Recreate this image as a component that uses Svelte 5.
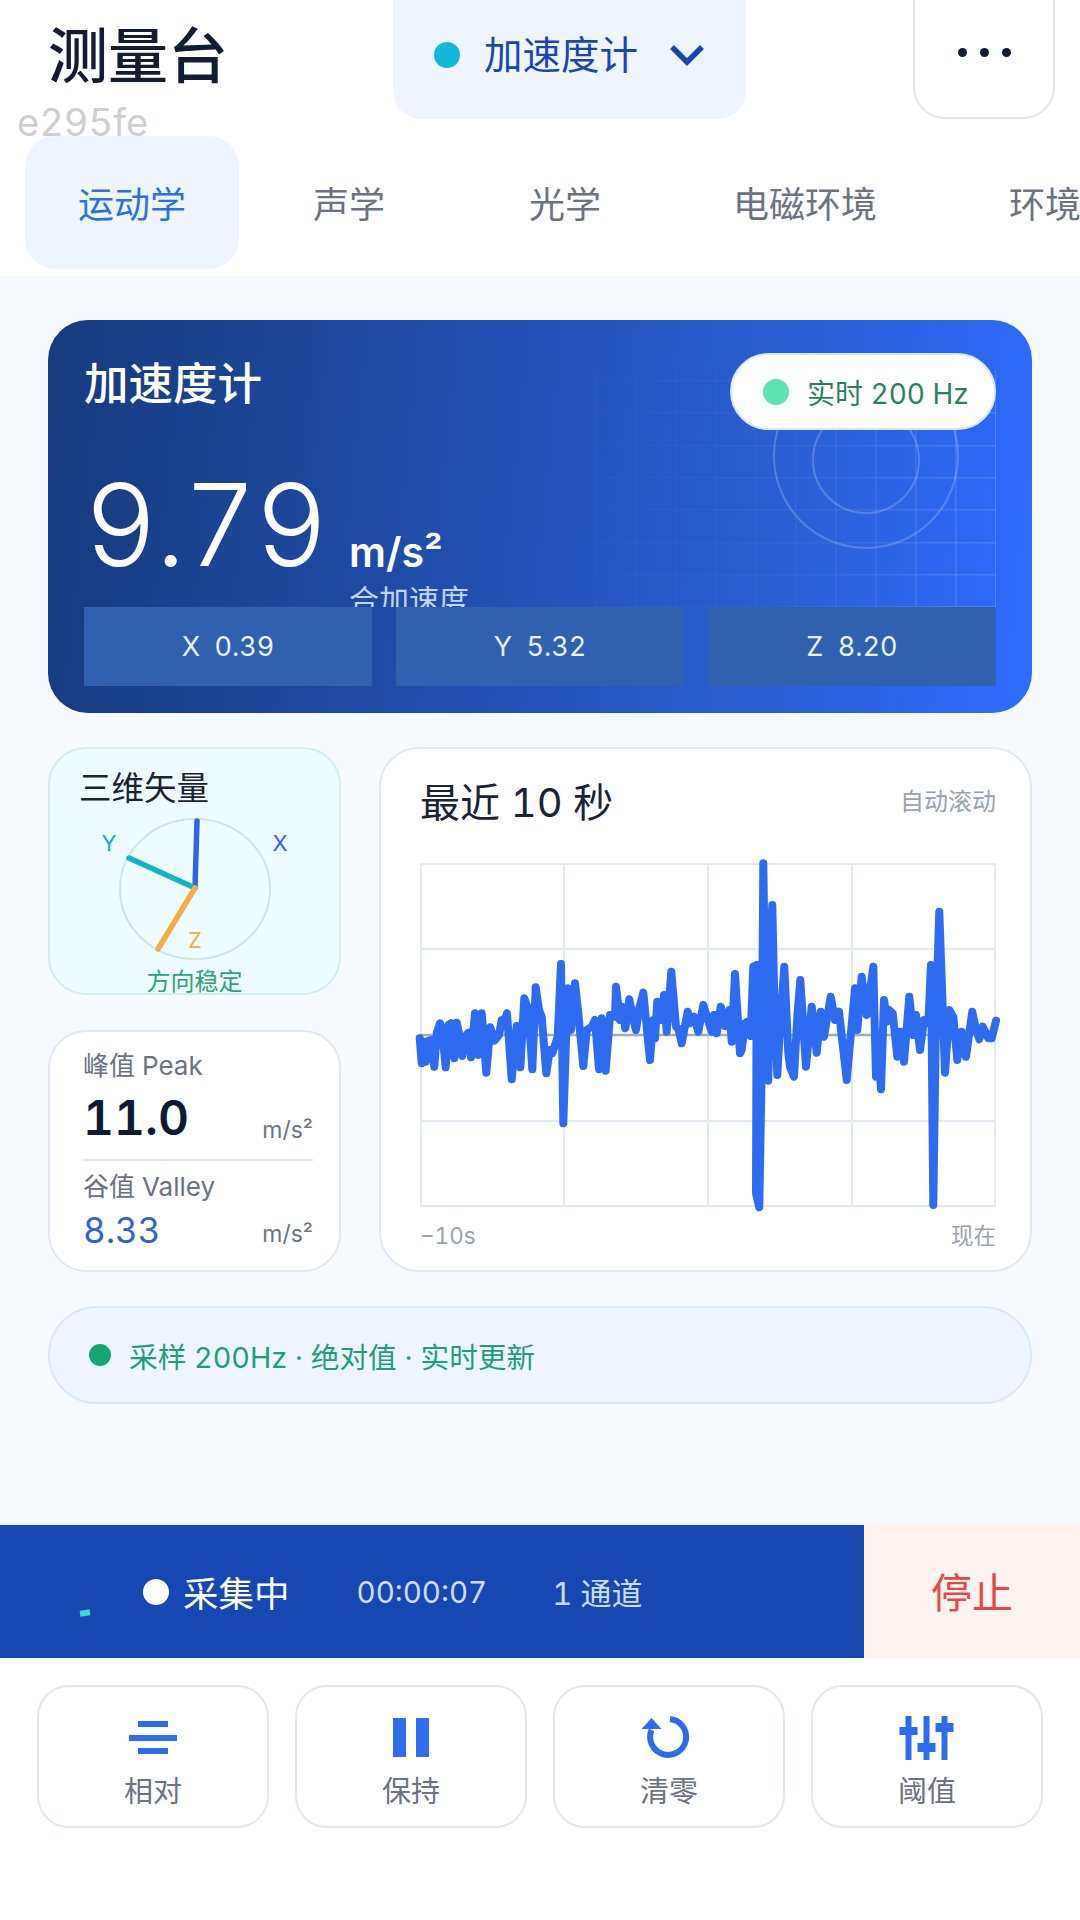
<script>
  const tabs = [
    { label: '运动学', active: true },
    { label: '声学' },
    { label: '光学' },
    { label: '电磁环境' },
    { label: '环境' }
  ];
  const axes = ['X  0.39', 'Y  5.32', 'Z  8.20'];
  const vLines = [0, 40, 80, 120, 160, 200, 240, 280, 320, 360, 400];
  const hLines = [10, 42, 75, 107, 139, 172, 204, 236];

  // Trace of the waveform, as [x, y] read from three crops of the chart.
  const a = [[14,265],[20,340],[28,275],[32,335],[40,272],[48,270],[58,350],[65,250],[75,220],[82,250],[92,352],[100,225],[108,220],[118,325],[125,218],[132,250],[142,318],[150,260],[160,248],[168,322],[180,190],[190,315],[200,190],[214,368],[226,232],[238,272],[252,255],[260,210],[270,210],[276,190],[290,388],[305,228],[316,352],[328,145],[340,180],[352,358],[362,112],[372,180],[380,200],[394,370],[404,300],[412,310],[428,260],[438,42],[445,520],[458,115],[468,240],[480,100],[490,190],[505,348],[515,240],[530,230],[540,210],[552,358],[560,205],[572,362],[585,195],[600,200]]
    .map(([x, y]) => [415 + x / 3, 950 + y / 3]);
  const b = [[18,110],[30,210],[35,170],[46,235],[58,148],[68,200],[78,240],[88,175],[100,128],[120,330],[130,210],[135,265],[142,155],[155,210],[162,135],[170,245],[184,65],[198,230],[205,235],[215,280],[233,185],[240,220],[252,200],[265,245],[280,165],[292,205],[305,245],[312,195],[320,250],[332,170],[345,228],[358,180],[365,275],[375,72],[390,310]]
    .map(([x, y]) => [610 + x / 3, 950 + y / 3]);
  const c = [[5,600],[15,520],[22,515],[32,558],[40,350],[50,345],[48,1030],[58,1072],[66,600],[70,40],[78,600],[85,692],[90,300],[97,165],[104,500],[112,675],[120,530],[133,350],[145,610],[150,650],[162,680],[172,500],[181,390],[198,650],[215,470],[230,608],[242,485],[252,560],[272,440],[285,510],[297,485],[320,690],[345,415],[352,540],[365,380],[380,495]]
    .map(([x, y]) => [740 + x / 3, 850 + y / 3]);
  const d = [[40,200],[48,530],[55,440],[63,568],[72,300],[82,365],[88,330],[98,340],[112,470],[122,395],[132,485],[148,290],[160,405],[168,345],[180,450],[192,360],[205,370],[213,195],[220,915],[228,350],[238,35],[255,518],[268,330],[280,350],[292,480],[305,395],[318,470],[337,335],[347,385],[358,418],[368,380],[385,415],[395,415],[408,362]]
    .map(([x, y]) => [860 + x / 3, 900 + y / 3]);
  const wave = [...a, ...b, ...c, ...d]
    .map(([x, y]) => `${(x - 420).toFixed(1)},${(y - 863).toFixed(1)}`)
    .join(' ');
</script>

<div class="page">
  <span class="stamp">e295fe</span>

  <header class="top">
    <h1>测量台</h1>
    <div class="selector">
      <i class="dot cyan"></i>
      <span>加速度计</span>
      <svg width="36" height="24" viewBox="0 0 36 24"><path d="M3 4 L18 19 L33 4" fill="none" stroke="#1a47ae" stroke-width="5.5" /></svg>
    </div>
    <div class="more"><i></i><i></i><i></i></div>
  </header>

  <nav class="tabs">
    {#each tabs as t}
      <div class="tab" class:active={t.active}>{t.label}</div>
    {/each}
  </nav>

  <main>
    <section class="hero">
      <svg class="deco" width="401" height="240" viewBox="0 0 401 240">
        <defs>
          <linearGradient id="fade" gradientUnits="userSpaceOnUse" x1="0" y1="0" x2="401" y2="0">
            <stop offset="0" stop-color="#fff" stop-opacity="0.015" />
            <stop offset="0.5" stop-color="#fff" stop-opacity="0.04" />
            <stop offset="1" stop-color="#fff" stop-opacity="0.14" />
          </linearGradient>
        </defs>
        {#each vLines as x}<rect x={x} y="0" width="1.5" height="240" fill="url(#fade)" />{/each}
        {#each hLines as y}<rect x="0" y={y} width="401" height="1.5" fill="url(#fade)" />{/each}
        <circle cx="271" cy="90" r="53" fill="none" stroke="#fff" stroke-opacity="0.2" stroke-width="2" />
        <circle cx="271" cy="86" r="92" fill="none" stroke="#fff" stroke-opacity="0.2" stroke-width="2" />
      </svg>

      <div class="hero-head">
        <h2>加速度计</h2>
        <div class="live"><i class="dot mint"></i><span>实时 200 Hz</span></div>
      </div>
      <div class="reading">
        <div class="number">9.79</div>
        <div class="unit-col">
          <div class="unit">m/s²</div>
          <div class="sub">合加速度</div>
        </div>
      </div>
      <div class="axes">
        {#each axes as ax}<div class="axis">{ax}</div>{/each}
      </div>
    </section>

    <div class="grid">
      <div class="left">
        <section class="card vector">
          <h3>三维矢量</h3>
          <svg class="dial" width="292" height="162" viewBox="0 0 292 162">
            <ellipse cx="147" cy="83" rx="75" ry="70" fill="none" stroke="#cfe5e5" stroke-width="2" />
            <line x1="147" y1="82" x2="149" y2="15" stroke="#2f63e0" stroke-width="5.5" stroke-linecap="round" />
            <line x1="147" y1="82" x2="81" y2="52" stroke="#14b3c9" stroke-width="5.5" stroke-linecap="round" />
            <line x1="147" y1="82" x2="110" y2="143" stroke="#f5ad4a" stroke-width="5.5" stroke-linecap="round" />
            <text x="61" y="45" fill="#14a9c4" text-anchor="middle">Y</text>
            <text x="232" y="45" fill="#2f63e0" text-anchor="middle">X</text>
            <text x="147" y="142" fill="#f5ad4a" text-anchor="middle">Z</text>
          </svg>
          <div class="steady">方向稳定</div>
        </section>

        <section class="card stats">
          <div class="stat-label">峰值 Peak</div>
          <div class="stat-row first">
            <span class="peak">11.0</span>
            <span class="stat-unit">m/s²</span>
          </div>
          <hr />
          <div class="stat-label">谷值 Valley</div>
          <div class="stat-row second">
            <span class="valley">8.33</span>
            <span class="stat-unit">m/s²</span>
          </div>
        </section>
      </div>

      <section class="card chart">
        <div class="chart-head">
          <h3>最近 10 秒</h3>
          <span>自动滚动</span>
        </div>
        <svg class="plot" width="576" height="344" viewBox="0 0 576 344">
          <g stroke="#e2eaf3" stroke-width="2" fill="none">
            <rect x="1" y="1" width="574" height="342" />
            <line x1="144" y1="0" x2="144" y2="344" />
            <line x1="288" y1="0" x2="288" y2="344" />
            <line x1="432" y1="0" x2="432" y2="344" />
            <line x1="0" y1="86" x2="576" y2="86" />
            <line x1="0" y1="258" x2="576" y2="258" />
          </g>
          <line x1="0" y1="172" x2="576" y2="172" stroke="#a3aebd" stroke-width="2.5" />
          <polyline points={wave} fill="none" stroke="#2f6bf0" stroke-width="8" stroke-linejoin="round" stroke-linecap="round" />
        </svg>
        <div class="chart-foot"><span>−10s</span><span>现在</span></div>
      </section>
    </div>

    <div class="note"><i class="dot green"></i><span>采样 200Hz · 绝对值 · 实时更新</span></div>
  </main>

  <div class="bar">
    <div class="bar-info">
      <i class="spark"></i>
      <i class="dot white"></i>
      <span class="rec">采集中</span>
      <span class="time">00:00:07</span>
      <span class="chan">1 通道</span>
    </div>
    <div class="stop">停止</div>
  </div>

  <div class="actions">
    <div class="action">
      <svg width="60" height="48" viewBox="0 0 60 48" fill="#2f6bed">
        <rect x="15" y="7" width="30" height="6" /><rect x="6" y="21" width="48" height="6" /><rect x="15" y="34" width="30" height="6" />
      </svg>
      <span>相对</span>
    </div>
    <div class="action">
      <svg width="60" height="48" viewBox="0 0 60 48" fill="#2f6bed">
        <rect x="12" y="4" width="13" height="39" /><rect x="35" y="4" width="13" height="39" />
      </svg>
      <span>保持</span>
    </div>
    <div class="action">
      <svg width="60" height="48" viewBox="0 0 60 48">
        <path d="M31 5 A18 18 0 1 1 12.5 16" fill="none" stroke="#2f6bed" stroke-width="6" />
        <path d="M2.5 15 L12.5 4 L22.5 15 Z" fill="#2f6bed" />
      </svg>
      <span>清零</span>
    </div>
    <div class="action">
      <svg width="60" height="48" viewBox="0 0 60 48" fill="#2f6bed">
        <rect x="8.5" y="2" width="6" height="44" /><rect x="26.5" y="2" width="6" height="44" /><rect x="44.5" y="2" width="6" height="44" />
        <rect x="2.5" y="13" width="18" height="8" /><rect x="20.5" y="29" width="18" height="9" /><rect x="38.5" y="9" width="18" height="9" />
      </svg>
      <span>阈值</span>
    </div>
  </div>
</div>

<style>
  :global(body) {
    margin: 0;
    background: #fff;
  }
  .page {
    position: relative;
    width: 1080px;
    height: 1920px;
    overflow: hidden;
    background: #fff;
    font-family: Inter, "Noto Sans CJK SC", sans-serif;
    font-variant-numeric: tabular-nums;
  }
  h1, h2, h3 {
    margin: 0;
    font-weight: 400;
  }
  .dot {
    display: block;
    border-radius: 50%;
    flex: none;
  }
  .stamp {
    position: absolute;
    left: 17px;
    top: 100px;
    font-size: 38px;
    line-height: 44px;
    color: #cfcfcf;
  }

  .top {
    display: flex;
    height: 136px;
    padding-left: 48px;
  }
  .top h1 {
    width: 345px;
    font-size: 60px;
    line-height: 113px;
    font-weight: 500;
    color: #111c30;
  }
  .selector {
    display: flex;
    align-items: center;
    width: 353px;
    height: 159px;
    margin-top: -40px;
    padding: 30px 0 0 41px;
    box-sizing: border-box;
    background: #eef5ff;
    border-radius: 28px;
    color: #1a47ae;
    font-size: 38.5px;
  }
  .selector .dot {
    width: 26px;
    height: 26px;
    background: #12b9d6;
    margin-right: 24px;
  }
  .selector span {
    margin: -5px 31px 0 0;
  }
  .more {
    display: flex;
    align-items: center;
    justify-content: center;
    gap: 13px;
    width: 142px;
    height: 159px;
    margin: -40px 0 0 167px;
    padding-top: 26px;
    box-sizing: border-box;
    border: 2px solid #e2e8f2;
    border-radius: 32px;
  }
  .more i {
    width: 9px;
    height: 9px;
    border-radius: 50%;
    background: #111c30;
  }

  .tabs {
    display: flex;
    height: 140px;
    padding-left: 25px;
    white-space: nowrap;
  }
  .tab {
    flex: none;
    box-sizing: border-box;
    min-width: 216px;
    height: 133px;
    padding: 0 60px;
    line-height: 139px;
    text-align: center;
    font-size: 36px;
    color: #6b7280;
  }
  .tab.active {
    min-width: 214px;
    margin-right: 2px;
    padding: 0;
    background: #eef5ff;
    border-radius: 30px;
    color: #2f6fe0;
  }

  main {
    box-sizing: border-box;
    height: 1249px;
    padding: 44px 48px 0;
    background: #f6faff;
  }
  .hero {
    position: relative;
    box-sizing: border-box;
    height: 393px;
    padding: 33px 36px 0;
    border-radius: 40px;
    background: linear-gradient(96deg, #173a7c 0%, #1f4ba6 35%, #2a5fd6 75%, #2f6bff 100%);
    overflow: hidden;
    color: #fff;
  }
  .deco {
    position: absolute;
    left: 547px;
    top: 50px;
  }
  .hero-head {
    position: relative;
    display: flex;
    justify-content: space-between;
    height: 77px;
  }
  .hero-head h2 {
    font-size: 44.5px;
    line-height: 62px;
    font-weight: 500;
  }
  .live {
    display: flex;
    align-items: center;
    gap: 18px;
    box-sizing: border-box;
    width: 266px;
    height: 77px;
    padding-left: 31px;
    background: #fff;
    border: 2px solid #dce7fb;
    border-radius: 39px;
    color: #2c7f62;
    font-size: 28px;
  }
  .dot.mint {
    width: 26px;
    height: 26px;
    background: #5ee3b2;
  }
  .reading {
    position: relative;
    display: flex;
    height: 177px;
    overflow: hidden;
  }
  .number {
    width: 236px;
    margin-top: 38px;
    font-size: 114px;
    line-height: 114px;
    font-weight: 300;
    letter-spacing: -2.5px;
    white-space: nowrap;
  }
  .unit-col {
    margin: 98px 0 0 29px;
  }
  .unit {
    font-size: 41px;
    line-height: 48px;
    font-weight: 600;
  }
  .sub {
    margin-top: 4px;
    font-size: 30px;
    line-height: 40px;
    color: #c3d4f5;
  }
  .axes {
    position: relative;
    display: grid;
    grid-template-columns: repeat(3, 288px);
    gap: 24px;
  }
  .axis {
    height: 79px;
    line-height: 79px;
    text-align: center;
    white-space: pre;
    font-size: 27px;
    color: #eaf1ff;
    background: #3061b1;
  }

  .grid {
    display: flex;
    gap: 38px;
    margin-top: 34px;
  }
  .left {
    display: flex;
    flex-direction: column;
    gap: 35px;
    width: 293px;
  }
  .card {
    box-sizing: border-box;
    background: #fff;
    border: 2px solid #e2e8f2;
    border-radius: 38px;
  }
  .vector {
    height: 248px;
    background: #effcff;
    border-color: #d3ecec;
    overflow: hidden;
  }
  .vector h3 {
    margin: 22px 0 0 29px;
    font-size: 32.5px;
    line-height: 36px;
    color: #1a2233;
  }
  .dial {
    display: block;
    margin: -1px 0 0 -2px;
    font-size: 22px;
  }
  .steady {
    text-align: center;
    font-size: 24px;
    line-height: 28px;
    color: #2aa37b;
  }
  .stats {
    height: 242px;
    padding: 16px 26px 0 33px;
  }
  .stat-label {
    font-size: 26px;
    line-height: 36px;
    color: #6b7280;
  }
  .stat-row {
    display: flex;
    justify-content: space-between;
    align-items: flex-end;
  }
  .stat-row.first {
    margin-top: 4px;
  }
  .stat-row.second {
    margin-top: 3px;
  }
  .peak {
    font-size: 48px;
    line-height: 60px;
    font-weight: 600;
    color: #0f1b33;
  }
  .valley {
    font-size: 35px;
    line-height: 44px;
    color: #2f63d0;
  }
  .stat-unit {
    font-size: 23px;
    line-height: 36px;
    color: #6b7280;
  }
  hr {
    margin: 11px 0 8px;
    border: 0;
    height: 2px;
    background: #e2e8f2;
  }
  .chart {
    flex: 1;
    height: 525px;
    padding: 0 34px 0 39px;
    border-radius: 40px;
  }
  .chart-head {
    display: flex;
    justify-content: space-between;
    align-items: center;
    height: 100px;
    margin-bottom: 14px;
    font-size: 24px;
    color: #9aa3af;
  }
  .chart-head h3 {
    padding-top: 2px;
    font-size: 40px;
    color: #1a2233;
  }
  .plot {
    display: block;
    overflow: visible;
  }
  .chart-foot {
    display: flex;
    justify-content: space-between;
    margin-top: 14px;
    font-size: 22.5px;
    line-height: 30px;
    color: #9aa3af;
  }
  .note {
    display: flex;
    align-items: center;
    gap: 18px;
    box-sizing: border-box;
    height: 98px;
    margin-top: 34px;
    padding-left: 39px;
    background: #eef5ff;
    border: 2px solid #dce7f8;
    border-radius: 49px;
    font-size: 28.7px;
    color: #1f9e78;
  }
  .dot.green {
    width: 22px;
    height: 22px;
    background: #17a673;
  }

  .bar {
    display: flex;
    height: 133px;
  }
  .bar-info {
    position: relative;
    display: flex;
    align-items: center;
    width: 864px;
    padding-left: 143px;
    box-sizing: border-box;
    background: #1747b0;
    color: #cddcf8;
    font-size: 29.5px;
  }
  .spark {
    position: absolute;
    left: 80px;
    top: 85px;
    width: 10px;
    height: 6px;
    background: #3ed9d0;
    transform: rotate(-8deg);
  }
  .dot.white {
    width: 26px;
    height: 26px;
    background: #fff;
  }
  .rec {
    margin-left: 14px;
    font-size: 35.5px;
    color: #fff;
  }
  .time {
    margin-left: 67px;
  }
  .chan {
    margin-left: 65px;
    font-size: 31px;
  }
  .stop {
    flex: 1;
    line-height: 137px;
    text-align: center;
    font-size: 41px;
    background: #fff3f0;
    color: #e04a4a;
  }

  .actions {
    display: flex;
    gap: 26px;
    margin-top: 27px;
    padding-left: 37px;
  }
  .action {
    display: flex;
    flex-direction: column;
    align-items: center;
    box-sizing: border-box;
    width: 232px;
    height: 143px;
    padding-top: 27px;
    background: #fff;
    border: 2px solid #e2e8f2;
    border-radius: 32px;
    font-size: 29px;
    color: #6b7280;
  }
  .action span {
    margin-top: 10px;
    line-height: 40px;
  }
</style>
